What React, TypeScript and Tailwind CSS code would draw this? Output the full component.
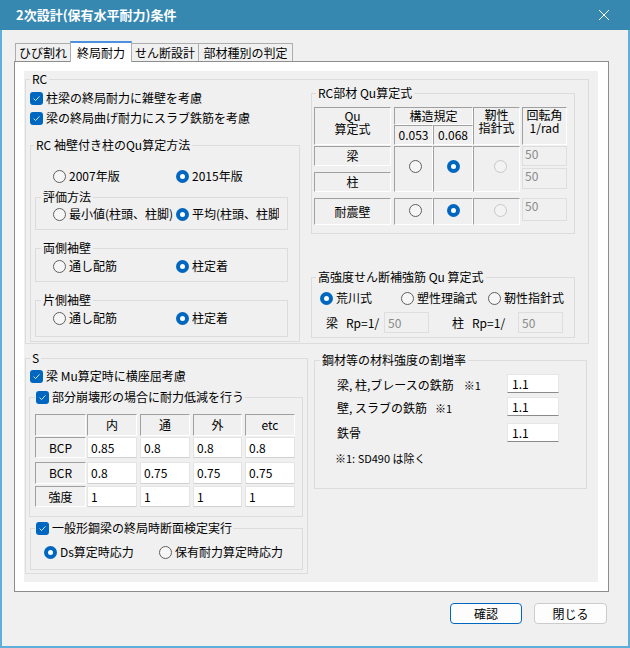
import React from "react";

// Ultimate strength settings dialog (2次設計 / 終局耐力 tab)

function Radio({ checked = false, disabled = false }: { checked?: boolean; disabled?: boolean }) {
  if (checked) {
    return (
      <span className="w-[13px] h-[13px] shrink-0 rounded-full bg-[#0067c0] flex items-center justify-center">
        <span className="w-[5px] h-[5px] rounded-full bg-white" />
      </span>
    );
  }
  return (
    <span
      className={
        disabled
          ? "w-[13px] h-[13px] shrink-0 rounded-full border border-[#c8c8c8] bg-[#f3f3f3]"
          : "w-[13px] h-[13px] shrink-0 rounded-full border border-[#5f5f5f] bg-[#f6f6f6]"
      }
    />
  );
}

function Check() {
  return (
    <span className="w-[13px] h-[13px] shrink-0 rounded-[3px] bg-[#0067c0] flex items-center justify-center">
      <svg width="9" height="9" viewBox="0 0 9 9">
        <path d="M1.6 4.6 L3.6 6.6 L7.4 2.4" fill="none" stroke="#d7e7f7" strokeWidth="1" />
      </svg>
    </span>
  );
}

function Opt({
  checked = false,
  className = "",
  children,
}: {
  checked?: boolean;
  className?: string;
  children: React.ReactNode;
}) {
  return (
    <div className={`flex items-center gap-[3px] whitespace-nowrap ${className}`}>
      <Radio checked={checked} />
      <span>{children}</span>
    </div>
  );
}

function CheckRow({ children }: { children: React.ReactNode }) {
  return (
    <div className="flex items-center gap-[3px] h-[20px] whitespace-nowrap">
      <Check />
      <span>{children}</span>
    </div>
  );
}

function Group({
  title,
  className,
  legendClass = "ml-[4px] px-[2px]",
  children,
}: {
  title: React.ReactNode;
  className: string;
  legendClass?: string;
  children: React.ReactNode;
}) {
  return (
    <fieldset className={`border border-[#dcdcdc] ${className}`}>
      <legend className={`leading-[14px] whitespace-nowrap ${legendClass}`}>{title}</legend>
      {children}
    </fieldset>
  );
}

// raised header cell used by the small grids
const cell3d =
  "border border-t-[#a0a0a0] border-l-[#a0a0a0] border-r-white border-b-white flex items-center justify-center text-center";

function Rot({ className }: { className: string }) {
  return (
    <div className={`border border-[#dedede] bg-[#f0f0f0] text-[#8a8a8a] pl-[2px] ${className}`}>50</div>
  );
}

function QuTable() {
  return (
    <div className="pl-[2px] pt-[7px] flex flex-col">
      {/* header */}
      <div className="flex h-[38px]">
        <div className={`${cell3d} w-[77px] flex-col !justify-start pt-px leading-[13px]`}>
          <span>Qu</span>
          <span>算定式</span>
        </div>
        <div className="ml-[3px] w-[79px] flex flex-col">
          <div className={`${cell3d} h-[18px]`}>構造規定</div>
          <div className="flex h-[20px]">
            <div className={`${cell3d} w-[39px]`}>0.053</div>
            <div className={`${cell3d} w-[40px]`}>0.068</div>
          </div>
        </div>
        <div className={`${cell3d} w-[47px] flex-col !justify-start leading-[13px]`}>
          <span>靭性</span>
          <span>指針式</span>
        </div>
        <div className={`${cell3d} ml-[2px] w-[45px] flex-col !justify-start leading-[13px]`}>
          <span>回転角</span>
          <span>1/rad</span>
        </div>
      </div>
      {/* 梁 / 柱 */}
      <div className="flex mt-px h-[46px]">
        <div className="w-[77px] flex flex-col">
          <div className={`${cell3d} h-[20px]`}>梁</div>
          <div className={`${cell3d} h-[20px] mt-[6px]`}>柱</div>
        </div>
        <div className={`${cell3d} ml-[3px] w-[39px] pl-[4px] pb-[6px]`}>
          <Radio />
        </div>
        <div className={`${cell3d} w-[40px] pb-[6px]`}>
          <Radio checked />
        </div>
        <div className={`${cell3d} w-[47px] pl-[8px] pb-[6px]`}>
          <Radio disabled />
        </div>
        <div className="ml-[2px] w-[45px] flex flex-col">
          <Rot className="h-[20px]" />
          <Rot className="h-[21px] mt-[2px]" />
        </div>
      </div>
      {/* 耐震壁 */}
      <div className="flex mt-[6px] h-[27px]">
        <div className={`${cell3d} w-[77px]`}>耐震壁</div>
        <div className={`${cell3d} ml-[3px] w-[39px] pl-[4px] pb-[2px]`}>
          <Radio />
        </div>
        <div className={`${cell3d} w-[40px] pb-[2px]`}>
          <Radio checked />
        </div>
        <div className={`${cell3d} w-[47px] pl-[8px] pb-[2px]`}>
          <Radio disabled />
        </div>
        <Rot className="ml-[2px] w-[45px] h-[23px]" />
      </div>
    </div>
  );
}

const colCls = [
  "w-[51px]",
  "ml-[1px] w-[50px]",
  "ml-[3px] w-[50px]",
  "ml-[3px] w-[49px]",
  "ml-[3px] w-[50px]",
];

function SRow({ label, values, className }: { label: string; values: string[]; className: string }) {
  return (
    <div className={`flex ${className}`}>
      <div className={`${cell3d} ${colCls[0]}`}>{label}</div>
      {values.map((v, i) => (
        <div
          key={i}
          className={`${colCls[i + 1]} bg-white border border-[#e4e4e4] border-b-[#d0d0d0] pl-[3px] flex items-center`}
        >
          {v}
        </div>
      ))}
    </div>
  );
}

function TextBox({ value }: { value: string }) {
  return (
    <div className="w-[52px] h-[19px] bg-white border border-[#e6e6e6] border-b-[#8a8a8a] pl-[4px] flex items-center">
      {value}
    </div>
  );
}

export default function App() {
  return (
    <div className="w-[630px] h-[648px] flex flex-col bg-[#f0f0f0] text-[12px] leading-[14px] text-black font-['Noto_Sans_CJK_JP',sans-serif]">
      {/* title bar */}
      <div className="h-[30px] shrink-0 bg-[#3688b1] flex items-center justify-between pl-[16px] pr-[21px] text-white">
        <span className="text-[13px] font-bold">2次設計(保有水平耐力)条件</span>
        <svg width="10" height="10" viewBox="0 0 10 10">
          <path d="M0 0 L10 10 M10 0 L0 10" stroke="white" strokeWidth="1" />
        </svg>
      </div>

      <div className="flex-1 flex flex-col border-x-2 border-b-2 border-[#5fb0d9]">
        {/* tabs */}
        <div className="relative z-10 ml-[13px] mt-[11px] flex items-end h-[21px]">
          <div className="mb-px h-[18px] w-[55px] border-l border-t border-[#adadad] bg-[#f0f0f0] flex items-center justify-center">
            ひび割れ
          </div>
          <div className="h-[21px] w-[62px] bg-white border-x border-[#adadad] border-t-2 border-t-[#4c91e0] flex items-center justify-center">
            終局耐力
          </div>
          <div className="mb-px h-[18px] w-[67px] border-r border-t border-[#adadad] bg-[#f0f0f0] flex items-center justify-center">
            せん断設計
          </div>
          <div className="mb-px h-[18px] w-[94px] border-r border-t border-[#adadad] bg-[#f0f0f0] flex items-center justify-center">
            部材種別の判定
          </div>
        </div>

        {/* tab panel */}
        <div className="ml-[12px] -mt-px w-[595px] h-[531px] border border-[#8d8d8d] bg-white pl-[9px] pt-[9px] pr-[10px] pb-[9px] flex">
          <div className="flex-1 bg-[#f0f0f0] pl-px pt-px flex flex-col">
            {/* RC */}
            <Group title="RC" className="w-[564px] h-[272px]">
              <div className="flex pl-[4px]">
                <div className="w-[263px] flex flex-col">
                  <div className="pt-[2px]">
                    <CheckRow>柱梁の終局耐力に雑壁を考慮</CheckRow>
                    <CheckRow>梁の終局曲げ耐力にスラブ鉄筋を考慮</CheckRow>
                  </div>
                  <Group
                    title="RC 袖壁付き柱のQu算定方法"
                    className="mt-[10px] h-[204px]"
                    legendClass="ml-[3px] px-[2px]"
                  >
                    <div className="grid grid-cols-[123px_123px] pl-[22px] mt-[14px] h-[20px] items-center">
                      <Opt>2007年版</Opt>
                      <Opt checked>2015年版</Opt>
                    </div>
                    <Group title="評価方法" className="ml-[4px] mt-[4px] w-[253px] h-[40px]" legendClass="ml-[5px] px-[2px]">
                      <div className="grid grid-cols-[123px_103px] pl-[17px] h-[20px] items-center">
                        <Opt>最小値(柱頭、柱脚)</Opt>
                        <Opt checked className="overflow-hidden">
                          平均(柱頭、柱脚)
                        </Opt>
                      </div>
                    </Group>
                    <Group title="両側袖壁" className="ml-[4px] mt-[11px] w-[253px] h-[41px]" legendClass="ml-[5px] px-[2px]">
                      <div className="grid grid-cols-[123px_103px] pl-[17px] mt-px h-[20px] items-center">
                        <Opt>通し配筋</Opt>
                        <Opt checked>柱定着</Opt>
                      </div>
                    </Group>
                    <Group title="片側袖壁" className="ml-[4px] mt-[11px] w-[253px] h-[44px]" legendClass="ml-[5px] px-[2px]">
                      <div className="grid grid-cols-[123px_103px] pl-[17px] mt-px h-[20px] items-center">
                        <Opt>通し配筋</Opt>
                        <Opt checked>柱定着</Opt>
                      </div>
                    </Group>
                  </Group>
                </div>

                <div className="ml-[18px] w-[264px] flex flex-col">
                  <Group title="RC部材 Qu算定式" className="h-[148px]">
                    <QuTable />
                  </Group>
                  <Group title="高強度せん断補強筋 Qu 算定式" className="mt-[36px] h-[68px]">
                    <div className="grid grid-cols-[81px_87px_auto] pl-[8px] mt-[5px] h-[18px] items-center">
                      <Opt checked>荒川式</Opt>
                      <Opt>塑性理論式</Opt>
                      <Opt>靭性指針式</Opt>
                    </div>
                    <div className="flex items-center pl-[14px] mt-[5px] h-[21px]">
                      <span className="w-[20px]">梁</span>
                      <span className="w-[38px]">Rp=1/</span>
                      <div className="w-[45px] h-[21px] border border-[#dedede] text-[#8a8a8a] pl-[3px] flex items-center">50</div>
                      <span className="ml-[23px] w-[20px]">柱</span>
                      <span className="w-[46px]">Rp=1/</span>
                      <div className="w-[45px] h-[21px] border border-[#dedede] text-[#8a8a8a] pl-[3px] flex items-center">50</div>
                    </div>
                  </Group>
                </div>
              </div>
            </Group>

            <div className="flex items-start">
              {/* S */}
              <Group title="S" className="mt-[7px] w-[283px] h-[223px]">
                <div className="pl-[4px] pt-px">
                  <CheckRow>梁 Mu算定時に横座屈考慮</CheckRow>
                </div>
                <fieldset className="ml-[3px] mt-[3px] w-[274px] h-[128px] border border-[#dcdcdc]">
                  <legend className="ml-[5px] px-px">
                    <span className="inline-flex items-center gap-[3px] h-[16px] whitespace-nowrap">
                      <Check />
                      部分崩壊形の場合に耐力低減を行う
                    </span>
                  </legend>
                  <div className="pl-[5px] pt-[9px] flex flex-col">
                    <div className="flex h-[22px]">
                      <div className={`${cell3d} ${colCls[0]}`} />
                      <div className={`${cell3d} ${colCls[1]}`}>内</div>
                      <div className={`${cell3d} ${colCls[2]}`}>通</div>
                      <div className={`${cell3d} ${colCls[3]}`}>外</div>
                      <div className={`${cell3d} ${colCls[4]}`}>etc</div>
                    </div>
                    <SRow label="BCP" values={["0.85", "0.8", "0.8", "0.8"]} className="mt-px h-[21px]" />
                    <SRow label="BCR" values={["0.8", "0.75", "0.75", "0.75"]} className="mt-[4px] h-[22px]" />
                    <SRow label="強度" values={["1", "1", "1", "1"]} className="mt-[2px] h-[21px]" />
                  </div>
                </fieldset>
                <fieldset className="ml-[4px] mt-[3px] w-[273px] h-[50px] border border-[#dcdcdc]">
                  <legend className="ml-[4px] px-px">
                    <span className="inline-flex items-center gap-[3px] h-[16px] whitespace-nowrap">
                      <Check />
                      一般形鋼梁の終局時断面検定実行
                    </span>
                  </legend>
                  <div className="grid grid-cols-[115px_auto] pl-[13px] mt-[6px] h-[20px] items-center">
                    <Opt checked>Ds算定時応力</Opt>
                    <Opt>保有耐力算定時応力</Opt>
                  </div>
                </fieldset>
              </Group>

              {/* material strength factors */}
              <Group title="鋼材等の材料強度の割増率" className="ml-[6px] mt-[9px] w-[273px] h-[136px]" legendClass="ml-[5px] px-[2px]">
                <div className="pl-[22px] pt-[7px] flex flex-col">
                  <div className="grid grid-cols-[170px_52px] items-center h-[19px]">
                    <span className="pt-[3px] whitespace-nowrap">
                      梁, 柱,ブレースの鉄筋<span className="ml-[10px] text-[11px]">※1</span>
                    </span>
                    <TextBox value="1.1" />
                  </div>
                  <div className="grid grid-cols-[170px_52px] items-center h-[19px] mt-[4px]">
                    <span className="pt-[3px] whitespace-nowrap">
                      壁, スラブの鉄筋<span className="ml-[8px] text-[11px]">※1</span>
                    </span>
                    <TextBox value="1.1" />
                  </div>
                  <div className="grid grid-cols-[170px_52px] items-center h-[19px] mt-[7px]">
                    <span>鉄骨</span>
                    <TextBox value="1.1" />
                  </div>
                  <div className="mt-[9px] -ml-[2px] text-[11px]">※1: SD490 は除く</div>
                </div>
              </Group>
            </div>
          </div>
        </div>

        {/* buttons */}
        <div className="flex justify-end gap-[12px] pr-[21px] mt-[11px]">
          <button className="w-[72px] h-[21px] rounded-[4px] border border-[#0067c0] bg-[#fdfdfd]">確認</button>
          <button className="w-[73px] h-[21px] rounded-[4px] border border-[#cccccc] bg-[#fdfdfd]">閉じる</button>
        </div>
      </div>
    </div>
  );
}
